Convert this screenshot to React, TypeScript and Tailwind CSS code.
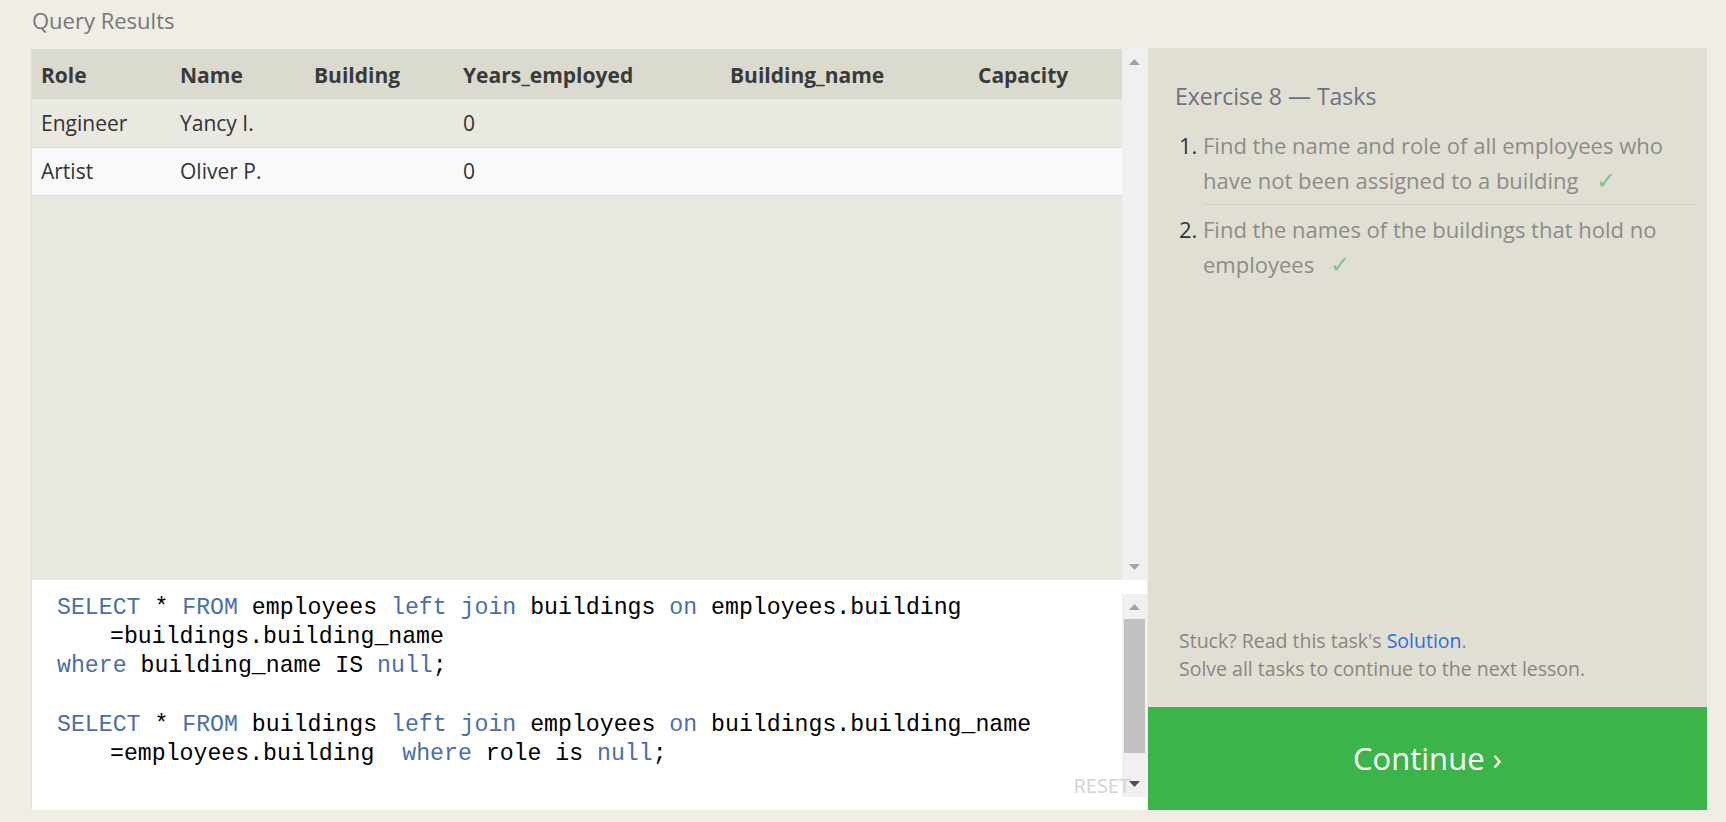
import React from "react";

const columns = [
  { key: "role", label: "Role", w: "w-[139px]" },
  { key: "name", label: "Name", w: "w-[134px]" },
  { key: "building", label: "Building", w: "w-[149px]" },
  { key: "years", label: "Years_employed", w: "w-[267px]" },
  { key: "bname", label: "Building_name", w: "w-[248px]" },
  { key: "capacity", label: "Capacity", w: "w-[153px]" },
];

const rows = [
  { role: "Engineer", name: "Yancy I.", building: "", years: "0", bname: "", capacity: "", bg: "bg-[#e9e8e1]" },
  { role: "Artist", name: "Oliver P.", building: "", years: "0", bname: "", capacity: "", bg: "bg-[#f9f9f9]" },
];

function Arrow({ up, color }: { up?: boolean; color: string }) {
  return (
    <svg width="11" height="6" viewBox="0 0 11 6" className="block">
      <polygon points={up ? "0,6 11,6 5.5,0" : "0,0 11,0 5.5,6"} fill={color} />
    </svg>
  );
}

// keyword span
function K({ children }: { children: React.ReactNode }) {
  return <span className="text-[#4a6ea9]">{children}</span>;
}

export default function App() {
  return (
    <div className="min-h-[822px] bg-[#f0ede6] font-['Open_Sans',sans-serif]">
      <div className="h-[48px] pl-[32px] pt-[5px] text-[22px] leading-[30px] text-[#777]">Query Results</div>

      <div className="flex h-[762px] ml-[31px] mr-[19px]">
        {/* left column */}
        <div className="w-[1116px] flex flex-col border-l border-[#e3e0d6]">
          {/* results */}
          <div className="h-[532px] flex pt-px">
            <div className="flex-1 bg-[#e9e8e1]">
              <div className="flex h-[51px] items-center pt-[3px] bg-[#dbdacf] border-b border-[#e4e3dc]">
                {columns.map((c) => (
                  <div key={c.key} className={`${c.w} pl-[9px] text-[21px] font-bold text-[#3a3a3a]`}>
                    {c.label}
                  </div>
                ))}
              </div>
              {rows.map((r, i) => (
                <div key={i} className={`flex h-[48px] items-center border-b border-[#dedcd4] ${r.bg}`}>
                  {columns.map((c) => (
                    <div key={c.key} className={`${c.w} pl-[9px] text-[21px] text-[#333]`}>
                      {(r as Record<string, string>)[c.key]}
                    </div>
                  ))}
                </div>
              ))}
            </div>
            <div className="w-[25px] bg-[#f0f0f0] flex flex-col items-center justify-between pt-[10px] pb-[10px]">
              <Arrow up color="#a3a3a3" />
              <Arrow color="#a3a3a3" />
            </div>
          </div>

          {/* editor */}
          <div className="relative h-[230px] bg-white flex">
            <div className="flex-1 pl-[25px] pt-[14px] font-['Liberation_Mono',monospace] text-[23.2px] leading-[29.2px] text-black whitespace-pre">
              <div>
                <K>SELECT</K> * <K>FROM</K> employees <K>left</K> <K>join</K> buildings <K>on</K> employees.building
              </div>
              <div className="pl-[53px]">=buildings.building_name</div>
              <div>
                <K>where</K> building_name IS <K>null</K>;
              </div>
              <div>&nbsp;</div>
              <div>
                <K>SELECT</K> * <K>FROM</K> buildings <K>left</K> <K>join</K> employees <K>on</K> buildings.building_name
              </div>
              <div className="pl-[53px]">
                =employees.building  <K>where</K> role is <K>null</K>;
              </div>
            </div>
            <div className="w-[25px] mt-[14px] mb-[13px] bg-[#f0f0f0] flex flex-col items-center">
              <div className="pt-[10px] pb-[9px]">
                <Arrow up color="#a3a3a3" />
              </div>
              <div className="w-[21px] h-[134px] bg-[#c1c1c1]" />
              <div className="mt-auto pb-[10px]">
                <Arrow color="#505050" />
              </div>
            </div>
            <div className="absolute right-[17px] bottom-[12px] text-[20px] leading-[24px] text-[#d2d2d2]">RESET</div>
          </div>
        </div>

        {/* right panel */}
        <div className="w-[559px] ml-px bg-[#e1dfd4] flex flex-col">
          <div className="pl-[27px] pt-[32px] text-[23px] leading-[32px] text-[#6b7280]">Exercise 8 — Tasks</div>
          <div className="pl-[31px] pr-[12px] pt-[16px] text-[22px] leading-[35px]">
            <div className="flex">
              <div className="w-[24px] text-[#333]">1.</div>
              <div className="flex-1 pb-[5px] border-b border-[#d3d1c6] text-[#8c8c8c]">
                Find the name and role of all employees who
                <br />
                have not been assigned to a building
                <span className="ml-[18px] text-[#7cc68a] font-['DejaVu_Sans',sans-serif] text-[24px] font-light">✓</span>
              </div>
            </div>
            <div className="flex pt-[7px]">
              <div className="w-[24px] text-[#333]">2.</div>
              <div className="flex-1 text-[#8c8c8c]">
                Find the names of the buildings that hold no
                <br />
                employees
                <span className="ml-[16px] text-[#7cc68a] font-['DejaVu_Sans',sans-serif] text-[24px] font-light">✓</span>
              </div>
            </div>
          </div>

          <div className="mt-auto pl-[31px] pb-[24px] text-[19.5px] leading-[28px] text-[#8a8580]">
            <div>
              Stuck? Read this task's <span className="text-[#2f6be0]">Solution</span>.
            </div>
            <div>Solve all tasks to continue to the next lesson.</div>
          </div>

          <div className="h-[103px] bg-[#3bb54a] flex items-center justify-center text-white text-[31px]">
            Continue ›
          </div>
        </div>
      </div>
    </div>
  );
}
